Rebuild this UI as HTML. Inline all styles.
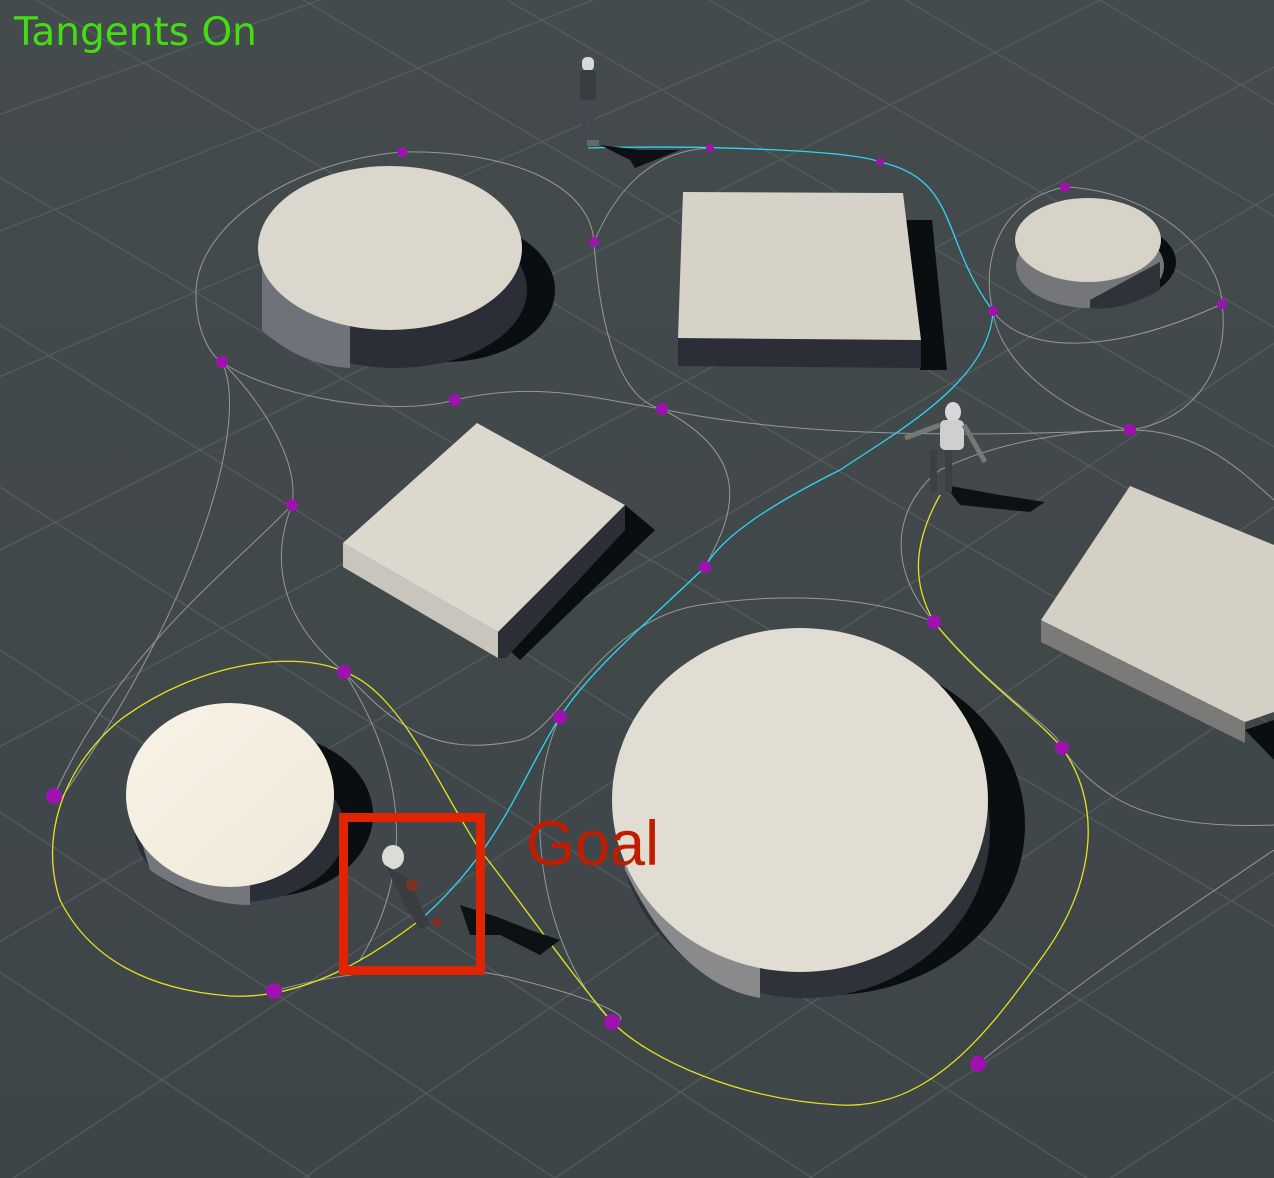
<!DOCTYPE html>
<html><head><meta charset="utf-8"><style>
html,body{margin:0;padding:0;background:#40484a;overflow:hidden;width:1274px;height:1178px;max-height:1178px}
svg{display:block;position:absolute;left:0;top:0;width:1274px;height:1178px;overflow:hidden}
</style></head><body>
<svg width="1274" height="1178" viewBox="0 0 1274 1178" xmlns="http://www.w3.org/2000/svg">
<defs>
<linearGradient id="bg" x1="0" y1="0" x2="0" y2="1"><stop offset="0" stop-color="#444b4d"/><stop offset="1" stop-color="#3e4548"/></linearGradient>
<linearGradient id="top1" x1="0" y1="0" x2="1" y2="1"><stop offset="0" stop-color="#f8f3e6"/><stop offset="1" stop-color="#eee8da"/></linearGradient>
<clipPath id="c"><rect width="1274" height="1178"/></clipPath>
</defs>
<g clip-path="url(#c)">
<rect width="1274" height="1178" fill="url(#bg)"/>
<g stroke="#5a6164" stroke-width="1.3" opacity="0.8">
<line x1="-200" y1="60" x2="1400" y2="1000"/>
<line x1="-200" y1="200" x2="1400" y2="1200"/>
<line x1="-200" y1="360" x2="1200" y2="1250"/>
<line x1="-200" y1="520" x2="1000" y2="1300"/>
<line x1="-200" y1="680" x2="800" y2="1340"/>
<line x1="-200" y1="840" x2="600" y2="1370"/>
<line x1="-100" y1="-80" x2="1400" y2="800"/>
<line x1="50" y1="-150" x2="1400" y2="650"/>
<line x1="250" y1="-150" x2="1400" y2="520"/>
<line x1="450" y1="-150" x2="1400" y2="400"/>
<line x1="650" y1="-150" x2="1400" y2="290"/>
<line x1="900" y1="-120" x2="1400" y2="180"/>
<line x1="1300" y1="-100" x2="-100" y2="600"/>
<line x1="1400" y1="0" x2="-100" y2="800"/>
<line x1="1400" y1="120" x2="-100" y2="1000"/>
<line x1="1400" y1="260" x2="-50" y2="1220"/>
<line x1="1400" y1="420" x2="200" y2="1250"/>
<line x1="1400" y1="600" x2="450" y2="1250"/>
<line x1="1400" y1="790" x2="700" y2="1250"/>
<line x1="1400" y1="990" x2="1000" y2="1250"/>
<line x1="1100" y1="-100" x2="-100" y2="420"/>
<line x1="850" y1="-100" x2="-100" y2="270"/>
<line x1="600" y1="-100" x2="-100" y2="150"/>
</g>
<g fill="#0a0e10">
<ellipse cx="445" cy="290" rx="110" ry="72"/>
<polygon points="905,220 932,220 947,370 920,370"/>
<ellipse cx="1108" cy="262" rx="68" ry="40"/>
<polygon points="477,423 625,505 655,530 520,660 498,640"/>
<ellipse cx="265" cy="815" rx="108" ry="82"/>
<ellipse cx="830" cy="825" rx="195" ry="170"/>
<polygon points="1245,730 1274,720 1274,760"/>
</g>
<ellipse cx="395" cy="290" rx="132" ry="78" fill="#2b2e36"/>
<path d="M262,270 L262,330 Q300,365 350,368 L350,300 Z" fill="#70727a"/>
<ellipse cx="390" cy="248" rx="132" ry="82" fill="#dcd7cc"/>
<polygon points="678,338 921,340 921,368 678,366" fill="#2b2e36"/>
<polygon points="683,192 903,193 921,340 678,338" fill="#d6d2c8"/>
<ellipse cx="1090" cy="266" rx="74" ry="42" fill="#75767a"/>
<path d="M1090,300 L1160,262 L1160,290 Q1120,312 1090,308Z" fill="#2f3238"/>
<ellipse cx="1088" cy="240" rx="73" ry="42" fill="#d8d3c8"/>
<polygon points="343,543 498,632 498,658 343,567" fill="#c8c5bc"/>
<polygon points="498,632 625,505 625,530 506,658 498,658" fill="#2c2f36"/>
<polygon points="343,543 477,423 625,505 498,632" fill="#dcd8ce"/>
<polygon points="1041,620 1245,722 1245,743 1041,642" fill="#7a7a78"/>
<polygon points="1130,486 1274,545 1274,712 1245,722 1041,620" fill="#d4d0c6"/>
<ellipse cx="240" cy="830" rx="105" ry="72" fill="#2b2e36"/>
<path d="M135,820 L150,870 Q200,905 250,905 L250,870Z" fill="#75767c"/>
<ellipse cx="230" cy="795" rx="104" ry="92" fill="url(#top1)"/>
<ellipse cx="805" cy="830" rx="185" ry="168" fill="#2f3238"/>
<path d="M615,790 L625,870 Q680,985 760,998 L760,900Z" fill="#8a8a8c"/>
<ellipse cx="800" cy="800" rx="188" ry="172" fill="#e2ddd2"/>
<g fill="none" stroke="#a8adaf" stroke-width="1" opacity="0.8">
<path d="M402,152 C300,160 200,220 196,290 C195,330 210,355 222,362"/>
<path d="M402,152 C500,150 590,180 594,242 C600,330 620,400 662,409"/>
<path d="M222,362 C260,390 380,420 455,400 C540,380 600,400 662,409"/>
<path d="M662,409 C760,430 900,440 1130,430"/>
<path d="M594,242 C620,180 660,150 710,148"/>
<path d="M1065,187 C1000,200 980,260 993,311 C1020,350 1100,360 1222,304"/>
<path d="M1065,187 C1150,190 1220,250 1222,304 C1230,360 1200,420 1130,430"/>
<path d="M993,311 C1000,370 1080,420 1130,430 C1200,430 1240,470 1274,500"/>
<path d="M222,362 C260,400 300,460 292,505 C270,560 280,620 344,672"/>
<path d="M222,362 C250,420 200,600 60,800"/>
<path d="M292,505 C230,570 120,650 54,796"/>
<path d="M344,672 C390,720 430,760 520,740 C560,730 600,620 700,605 C800,590 880,600 934,622"/>
<path d="M934,622 C880,560 900,500 940,470 C1000,440 1080,430 1130,430"/>
<path d="M705,567 C730,520 760,460 662,409"/>
<path d="M934,622 C1000,700 1060,730 1062,748 C1100,800 1150,830 1274,825"/>
<path d="M560,717 C520,800 540,950 612,1022"/>
<path d="M274,991 C350,970 450,960 520,980 C600,1000 640,1020 612,1022"/>
<path d="M344,672 C400,760 420,860 360,960"/>
<path d="M978,1064 C1080,980 1200,900 1274,850"/>
</g>
<path d="M588,148 C700,145 850,150 880,162 C960,180 940,240 993,311 C990,380 900,430 840,470 C760,510 720,540 705,567 C650,620 590,670 560,717 C520,780 500,850 420,920" fill="none" stroke="#2fd6f0" stroke-width="1.3"/>
<path d="M940,495 C915,540 910,580 934,622 C980,680 1040,720 1062,748 C1100,800 1100,880 1040,960 C990,1030 930,1110 840,1105 C740,1100 650,1060 612,1022 C560,960 520,900 480,850 C440,790 400,690 344,672 C300,650 200,660 120,720 C60,770 40,840 60,900 C90,960 150,990 230,996 C310,1000 380,950 420,920" fill="none" stroke="#e8e020" stroke-width="1.3"/>
<g fill="#a012b0">
<circle cx="402" cy="152" r="5"/><circle cx="710" cy="148" r="4"/><circle cx="880" cy="162" r="4"/>
<circle cx="1065" cy="187" r="5"/><circle cx="594" cy="242" r="5"/><circle cx="993" cy="311" r="5"/>
<circle cx="1222" cy="304" r="5"/><circle cx="222" cy="362" r="6"/><circle cx="455" cy="400" r="6"/>
<circle cx="662" cy="409" r="6"/><circle cx="1130" cy="430" r="6"/><circle cx="292" cy="505" r="6"/>
<circle cx="705" cy="567" r="6"/><circle cx="934" cy="622" r="7"/><circle cx="344" cy="672" r="7"/>
<circle cx="560" cy="717" r="7"/><circle cx="1062" cy="748" r="7"/><circle cx="54" cy="796" r="8"/>
<circle cx="274" cy="991" r="8"/><circle cx="612" cy="1022" r="8"/><circle cx="978" cy="1064" r="8"/>
</g>
<g>
<path d="M600,145 L640,150 L680,150 L660,158 L635,168 L630,160 Z" fill="#0d1113"/>
<rect x="582" y="57" width="12" height="14" rx="5" fill="#d8d8d8"/>
<rect x="580" y="70" width="16" height="30" rx="4" fill="#3a3c40"/>
<rect x="582" y="100" width="5" height="42" fill="#454850"/><rect x="589" y="100" width="5" height="42" fill="#454850"/>
<rect x="587" y="140" width="12" height="6" fill="#666"/>
<path d="M945,485 L1000,495 L1045,502 L1030,512 L960,505 Z" fill="#0d1113"/>
<ellipse cx="953" cy="412" rx="8" ry="10" fill="#d8d8d8"/>
<rect x="940" y="420" width="24" height="30" rx="5" fill="#cfcfcf"/>
<path d="M940,425 L905,438 M964,425 L985,462" stroke="#777" stroke-width="5"/>
<rect x="930" y="450" width="7" height="42" fill="#3d3f44"/><rect x="945" y="450" width="7" height="42" fill="#3d3f44"/>
<path d="M460,905 L500,918 L530,930 L560,940 L540,955 L500,935 L470,935 Z" fill="#0d1113"/>
<ellipse cx="393" cy="857" rx="11" ry="12" fill="#dcdcd6"/>
<path d="M385,865 L410,880 L420,905 L430,925 L420,930 L405,905 L395,885 Z" fill="#3a3c40"/>
<ellipse cx="412" cy="885" rx="6" ry="6" fill="#7a3325"/>
<ellipse cx="437" cy="922" rx="5" ry="5" fill="#7a3325"/>
</g>
<rect x="343.5" y="817.5" width="137" height="153" fill="none" stroke="#e02400" stroke-width="9"/>
<text x="526" y="865" font-family="Liberation Sans, sans-serif" font-size="63" fill="#c01c00">Goal</text>
<text x="14" y="45" font-family="DejaVu Sans, sans-serif" font-size="39" fill="#44dd11">Tangents On</text>
</g>
</svg>
</body></html>
